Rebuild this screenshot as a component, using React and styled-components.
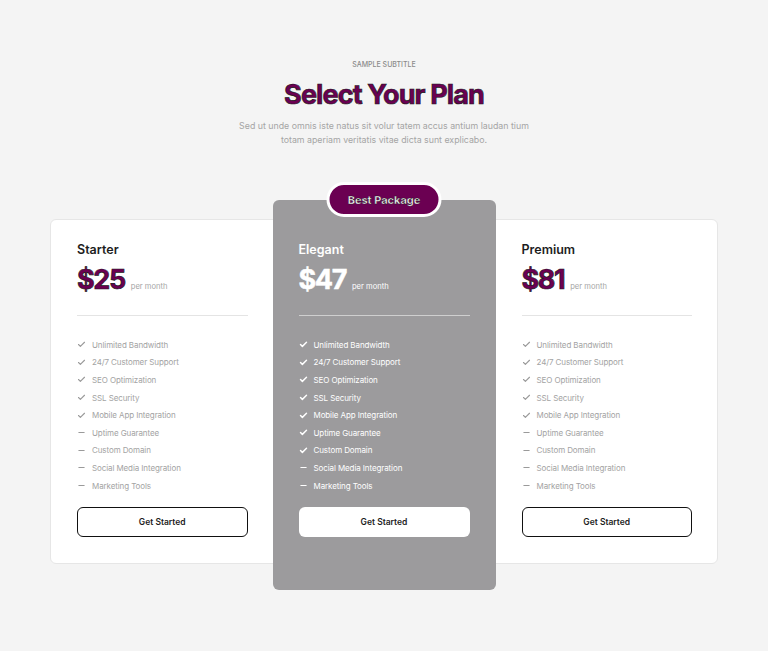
import React from 'react'
import styled, { createGlobalStyle } from 'styled-components'
import { Check, Minus } from 'lucide-react'

const GlobalStyle = createGlobalStyle`
    body {
        margin: 0;
        background: #f4f4f4;
        font-family: Inter, "Noto Sans", sans-serif;
    }
`

const Page = styled.main`
    padding: 60px 50px 40px;
    text-align: center;
`
const Subtitle = styled.p`
    margin: 0;
    font-size: 7px;
    line-height: 10px;
    color: #8a8a8a;
    text-transform: uppercase;
    font-weight: 500;
`
const Title = styled.h1`
    margin: 8px 0 0;
    font-size: 27px;
    line-height: 34px;
    font-weight: 700;
    letter-spacing: -0.9px;
    color: #6b0052;
    -webkit-text-stroke: 0.7px #1c1c1c;
`
const Lead = styled.p`
    margin: 7px auto 0;
    width: 300px;
    font-size: 8.8px;
    line-height: 14px;
    color: #a5a5a5;
`
const Board = styled.section`
    margin-top: 72px;
    display: grid;
    grid-template-columns: 1fr 223px 1fr;
    background: #fff;
    border: 1px solid #e6e6e6;
    border-radius: 6px;
    text-align: left;
`
const Plan = styled.div`
    position: relative;
    display: flex;
    flex-direction: column;
    padding: ${({ $featured }) => ($featured ? '42px 26px 52px' : '22px 25px 26px 26px')};
    margin: ${({ $featured }) => ($featured ? '-20px 0 -27px' : '0')};
    background: ${({ $featured }) => ($featured ? '#9c9b9d' : 'transparent')};
    border-radius: 6px;
    color: ${({ $featured }) => ($featured ? '#fff' : '#1d1d1d')};
`
const Badge = styled.div`
    position: absolute;
    top: -18px;
    left: 50%;
    transform: translateX(-50%);
    width: 109px;
    height: 29px;
    border: 3px solid #fff;
    border-radius: 20px;
    background: #6b0052;
    color: #fff;
    font-size: 11px;
    font-weight: 700;
    display: flex;
    align-items: center;
    justify-content: center;
    -webkit-text-stroke: 0.4px #1c1c1c;
`
const Name = styled.h3`
    margin: 0;
    font-size: 12.5px;
    line-height: 16px;
    font-weight: 600;
`
const PriceRow = styled.div`
    margin-top: 5px;
    display: flex;
    align-items: baseline;
    gap: 6px;
`
const Price = styled.span`
    font-size: 27px;
    line-height: 34px;
    font-weight: 700;
    letter-spacing: -1.4px;
    color: ${({ $featured }) => ($featured ? '#fff' : '#6b0052')};
    -webkit-text-stroke: ${({ $featured }) => ($featured ? '0.5px #fff' : '0.7px #1c1c1c')};
`
const Period = styled.span`
    font-size: 7.6px;
    color: ${({ $featured }) => ($featured ? '#fff' : '#a5a5a5')};
`
const Divider = styled.hr`
    margin: 18px 0 20px;
    border: 0;
    border-top: 1px solid ${({ $featured }) => ($featured ? '#cfcfcf' : '#e4e4e4')};
`
const Features = styled.ul`
    margin: 0;
    padding: 0;
    list-style: none;
`
const Feature = styled.li`
    display: flex;
    align-items: center;
    gap: 6px;
    height: 17.6px;
    font-size: 8px;
    letter-spacing: -0.1px;
    color: ${({ $featured }) => ($featured ? '#fff' : '#a3a3a3')};
    svg {
        color: ${({ $featured }) => ($featured ? '#fff' : '#9a9a9a')};
        flex-shrink: 0;
    }
`
const Button = styled.button`
    margin-top: 13px;
    height: 30px;
    width: 100%;
    border-radius: 6px;
    border: ${({ $featured }) => ($featured ? '0' : '1.5px solid #111')};
    background: #fff;
    color: #1d1d1d;
    font-family: inherit;
    font-size: 8.5px;
    font-weight: 600;
    cursor: pointer;
`

const featureNames = [
    'Unlimited Bandwidth',
    '24/7 Customer Support',
    'SEO Optimization',
    'SSL Security',
    'Mobile App Integration',
    'Uptime Guarantee',
    'Custom Domain',
    'Social Media Integration',
    'Marketing Tools'
]

const plans = [
    { name: 'Starter', price: 25, included: 5 },
    { name: 'Elegant', price: 47, included: 7, featured: true },
    { name: 'Premium', price: 81, included: 5 }
]

const PlanCard = ({ name, price, included, featured }) => (
    <Plan $featured={featured}>
        {featured && <Badge>Best Package</Badge>}
        <Name>{name}</Name>
        <PriceRow>
            <Price $featured={featured}>${price}</Price>
            <Period $featured={featured}>per month</Period>
        </PriceRow>
        <Divider $featured={featured} />
        <Features>
            {featureNames.map((f, i) => (
                <Feature key={f} $featured={featured}>
                    {i < included
                        ? <Check size={9} strokeWidth={featured ? 3.8 : 3} />
                        : <Minus size={9} strokeWidth={3} />}
                    {f}
                </Feature>
            ))}
        </Features>
        <Button $featured={featured}>Get Started</Button>
    </Plan>
)

export default function App() {
    return (
        <>
            <GlobalStyle />
            <Page>
                <Subtitle>Sample subtitle</Subtitle>
                <Title>Select Your Plan</Title>
                <Lead>Sed ut unde omnis iste natus sit volur tatem accus antium laudan tium totam aperiam veritatis vitae dicta sunt explicabo.</Lead>
                <Board>
                    {plans.map(p => <PlanCard key={p.name} {...p} />)}
                </Board>
            </Page>
        </>
    )
}
